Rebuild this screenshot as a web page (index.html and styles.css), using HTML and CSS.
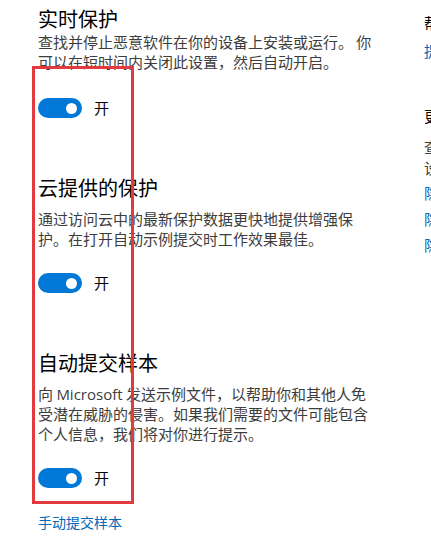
FILE: index.html
```html
<!DOCTYPE html>
<html lang="zh-CN">
<head>
<meta charset="utf-8">
<title>病毒和威胁防护设置</title>
<link rel="stylesheet" href="styles.css">
</head>
<body>
<div class="page">
  <div class="main">
    <section class="setting first">
      <h2 class="title">实时保护</h2>
      <p class="desc">查找并停止恶意软件在你的设备上安装或运行。 你可以在短时间内关闭此设置，然后自动开启。</p>
      <div class="toggle-row">
        <span class="toggle"><span class="knob"></span></span>
        <span class="state">开</span>
      </div>
    </section>
    <section class="setting">
      <h2 class="title">云提供的保护</h2>
      <p class="desc">通过访问云中的最新保护数据更快地提供增强保护。在打开自动示例提交时工作效果最佳。</p>
      <div class="toggle-row">
        <span class="toggle"><span class="knob"></span></span>
        <span class="state">开</span>
      </div>
    </section>
    <section class="setting">
      <h2 class="title">自动提交样本</h2>
      <p class="desc">向 <span class="latin">Microsoft</span> 发送示例文件，以帮助你和其他人免受潜在威胁的侵害。如果我们需要的文件可能包含个人信息，我们将对你进行提示。</p>
      <div class="toggle-row">
        <span class="toggle"><span class="knob"></span></span>
        <span class="state">开</span>
      </div>
    </section>
    <a class="link manual" href="#">手动提交样本</a>
    <div class="highlight"></div>
  </div>
  <aside class="side">
    <h3 class="side-title">帮助改进 Windows 安全中心</h3>
    <a class="link side-link first-link" href="#">提供反馈</a>
    <h3 class="side-title privacy">更改隐私设置</h3>
    <p class="side-desc">查看和更改 Windows 10 设备的隐私设置。</p>
    <a class="link side-link desc-link" href="#">隐私设置</a>
    <a class="link side-link" href="#">隐私仪表板</a>
    <a class="link side-link" href="#">隐私声明</a>
  </aside>
</div>
</body>
</html>
```
FILE: styles.css
```css
html, body {
  margin: 0;
  padding: 0;
  background: #ffffff;
  overflow: hidden;
}

body {
  font-family: "Noto Sans CJK SC", sans-serif;
  color: #000000;
}

.page {
  width: 431px;
  height: 558px;
  overflow: hidden;
  display: flex;
  gap: 48px;
  padding-left: 38px;
  box-sizing: border-box;
}

.main {
  position: relative;
  flex: 0 0 338px;
  width: 338px;
  display: flex;
  flex-direction: column;
  padding-top: 6px;
}

.setting {
  display: flex;
  flex-direction: column;
  margin-bottom: 57px;
}

.title {
  margin: 0 0 8px 0;
  font-size: 20px;
  line-height: 26px;
  font-weight: normal;
  color: #000000;
}

.setting.first .title {
  margin-bottom: 0;
}

.desc {
  margin: 0;
  font-size: 15px;
  line-height: 20px;
  color: #3d3d3d;
}

.latin {
  font-family: "Open Sans", sans-serif;
}

.toggle-row {
  margin-top: 24px;
  display: flex;
  align-items: center;
  gap: 12px;
  height: 20px;
}

.setting.first .toggle-row {
  margin-top: 26px;
}

.toggle {
  width: 44px;
  height: 20px;
  border-radius: 10px;
  background: #0078d7;
  display: flex;
  align-items: center;
  justify-content: flex-end;
  padding-right: 5px;
  box-sizing: border-box;
}

.knob {
  width: 11px;
  height: 11px;
  border-radius: 50%;
  background: #ffffff;
}

.state {
  font-size: 15px;
  line-height: 20px;
  color: #000000;
}

.setting:last-of-type {
  margin-bottom: 24px;
}

.link {
  color: #0067b8;
  text-decoration: none;
  font-size: 15px;
  line-height: 20px;
}

.manual {
  font-size: 14px;
  align-self: flex-start;
}

.highlight {
  position: absolute;
  left: -6px;
  top: 66px;
  width: 102px;
  height: 438px;
  border: 3px solid #e23a3f;
  box-sizing: border-box;
}

.side {
  flex: 0 0 170px;
  width: 170px;
  display: flex;
  flex-direction: column;
  align-items: flex-start;
  padding-top: 13px;
}

.side-title {
  margin: 0;
  font-size: 15px;
  line-height: 20px;
  font-weight: normal;
  color: #000000;
  white-space: nowrap;
}

.side-title.privacy {
  margin-top: 45px;
}

.side-desc {
  margin: 10px 0 0 0;
  font-size: 15px;
  line-height: 21px;
  color: #3d3d3d;
  width: 165px;
}

.side-link {
  margin-top: 6px;
  white-space: nowrap;
}

.side-link.first-link {
  margin-top: 8px;
}

.side-link.desc-link {
  margin-top: 5px;
}
```
